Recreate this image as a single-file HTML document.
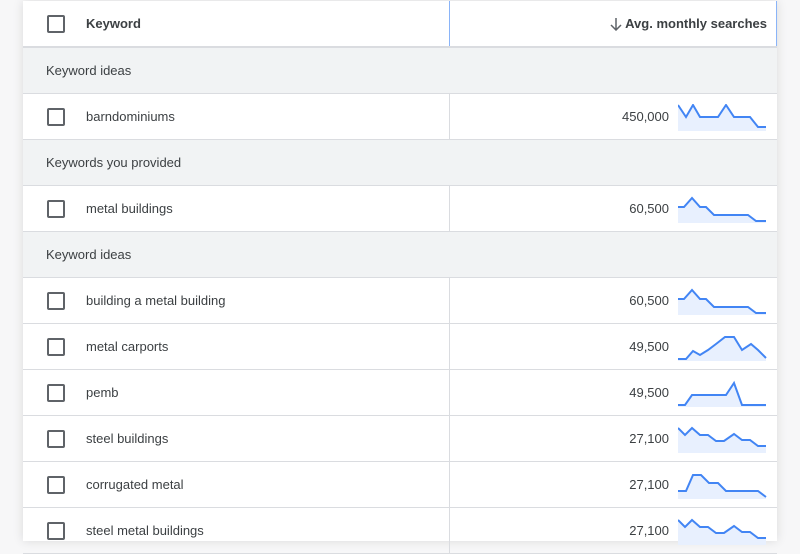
<!DOCTYPE html>
<html><head><style>
html,body{margin:0;width:800px;height:533px;overflow:hidden}
body{background:#f7f7f8;font-family:"Liberation Sans",Arial,sans-serif;color:#3c4043}
.t{position:absolute;left:23px;top:1px;width:754px;height:540px;background:#fff;box-shadow:0 0 10px rgba(0,0,0,.12)}
.r{position:absolute;left:0;width:754px;height:46px;border-bottom:1px solid #dadce0;box-sizing:border-box}
.g{background:#f1f3f4;font-size:13px;line-height:46px;padding-left:23px}
.cb{position:absolute;left:24px;top:14px;width:14px;height:14px;border:2px solid #5f6368;border-radius:2px}
.k{position:absolute;left:63px;top:0;line-height:46px;font-size:13px}
.d{position:absolute;left:426px;top:0;width:1px;height:100%;background:#dadce0}
.n{position:absolute;right:108px;line-height:46px;font-size:13px}
svg.s{position:absolute;left:655px;top:10px}
</style></head><body><div class="t">
<div class="r" style="top:0;height:47px;border-bottom:2px solid #dadce0"><div class="cb" style="top:14px"></div><div class="k" style="font-weight:bold;line-height:46px">Keyword</div><div class="d" style="background:#8ab4f8"></div><div style="position:absolute;right:0;top:0;width:1px;height:100%;background:#8ab4f8"></div><svg style="position:absolute;left:587px;top:17px" width="12" height="13" viewBox="0 0 12 13"><path d="M6,0V12M1,7L6,12L11,7" fill="none" stroke="#5f6368" stroke-width="1.5"/></svg><div style="position:absolute;right:10px;line-height:46px;font-size:13px;font-weight:bold;color:#3c4043">Avg. monthly searches</div></div>
<div class="r g" style="top:47px">Keyword ideas</div>
<div class="r" style="top:93px"><div class="cb"></div><div class="k">barndominiums</div><div class="d"></div><div class="n">450,000</div><svg class="s" width="90" height="28" viewBox="0 -1 90 28"><path d="M0,0 8,12 15,0 22,12 40,12 48,0 56,12 72,12 80,22 88,22 88,26 0,26Z" fill="#e8f0fe"/><polyline points="0,0 8,12 15,0 22,12 40,12 48,0 56,12 72,12 80,22 88,22" fill="none" stroke="#4285f4" stroke-width="2"/></svg></div>
<div class="r g" style="top:139px">Keywords you provided</div>
<div class="r" style="top:185px"><div class="cb"></div><div class="k">metal buildings</div><div class="d"></div><div class="n">60,500</div><svg class="s" width="90" height="28" viewBox="0 -1 90 28"><path d="M0,10 6,10 14,1 22,10 28,10 36,18 70,18 78,24 88,24 88,26 0,26Z" fill="#e8f0fe"/><polyline points="0,10 6,10 14,1 22,10 28,10 36,18 70,18 78,24 88,24" fill="none" stroke="#4285f4" stroke-width="2"/></svg></div>
<div class="r g" style="top:231px">Keyword ideas</div>
<div class="r" style="top:277px"><div class="cb"></div><div class="k">building a metal building</div><div class="d"></div><div class="n">60,500</div><svg class="s" width="90" height="28" viewBox="0 -1 90 28"><path d="M0,10 6,10 14,1 22,10 28,10 36,18 70,18 78,24 88,24 88,26 0,26Z" fill="#e8f0fe"/><polyline points="0,10 6,10 14,1 22,10 28,10 36,18 70,18 78,24 88,24" fill="none" stroke="#4285f4" stroke-width="2"/></svg></div>
<div class="r" style="top:323px"><div class="cb"></div><div class="k">metal carports</div><div class="d"></div><div class="n">49,500</div><svg class="s" width="90" height="28" viewBox="0 -1 90 28"><path d="M0,24 8,24 15,16 22,20 30,15 38,9 47,2 56,2 64,15 73,9 80,15 88,23 88,26 0,26Z" fill="#e8f0fe"/><polyline points="0,24 8,24 15,16 22,20 30,15 38,9 47,2 56,2 64,15 73,9 80,15 88,23" fill="none" stroke="#4285f4" stroke-width="2"/></svg></div>
<div class="r" style="top:369px"><div class="cb"></div><div class="k">pemb</div><div class="d"></div><div class="n">49,500</div><svg class="s" width="90" height="28" viewBox="0 -1 90 28"><path d="M0,24 7,24 14,14 48,14 56,2 64,24 88,24 88,26 0,26Z" fill="#e8f0fe"/><polyline points="0,24 7,24 14,14 48,14 56,2 64,24 88,24" fill="none" stroke="#4285f4" stroke-width="2"/></svg></div>
<div class="r" style="top:415px"><div class="cb"></div><div class="k">steel buildings</div><div class="d"></div><div class="n">27,100</div><svg class="s" width="90" height="28" viewBox="0 -1 90 28"><path d="M0,1 7,8 14,1 22,8 30,8 38,14 46,14 56,7 64,13 72,13 80,19 88,19 88,26 0,26Z" fill="#e8f0fe"/><polyline points="0,1 7,8 14,1 22,8 30,8 38,14 46,14 56,7 64,13 72,13 80,19 88,19" fill="none" stroke="#4285f4" stroke-width="2"/></svg></div>
<div class="r" style="top:461px"><div class="cb"></div><div class="k">corrugated metal</div><div class="d"></div><div class="n">27,100</div><svg class="s" width="90" height="28" viewBox="0 -1 90 28"><path d="M0,18 8,18 15,2 23,2 31,10 40,10 48,18 80,18 88,24 88,26 0,26Z" fill="#e8f0fe"/><polyline points="0,18 8,18 15,2 23,2 31,10 40,10 48,18 80,18 88,24" fill="none" stroke="#4285f4" stroke-width="2"/></svg></div>
<div class="r" style="top:507px"><div class="cb"></div><div class="k">steel metal buildings</div><div class="d"></div><div class="n">27,100</div><svg class="s" width="90" height="28" viewBox="0 -1 90 28"><path d="M0,1 7,8 14,1 22,8 30,8 38,14 46,14 56,7 64,13 72,13 80,19 88,19 88,26 0,26Z" fill="#e8f0fe"/><polyline points="0,1 7,8 14,1 22,8 30,8 38,14 46,14 56,7 64,13 72,13 80,19 88,19" fill="none" stroke="#4285f4" stroke-width="2"/></svg></div>
</div></body></html>
